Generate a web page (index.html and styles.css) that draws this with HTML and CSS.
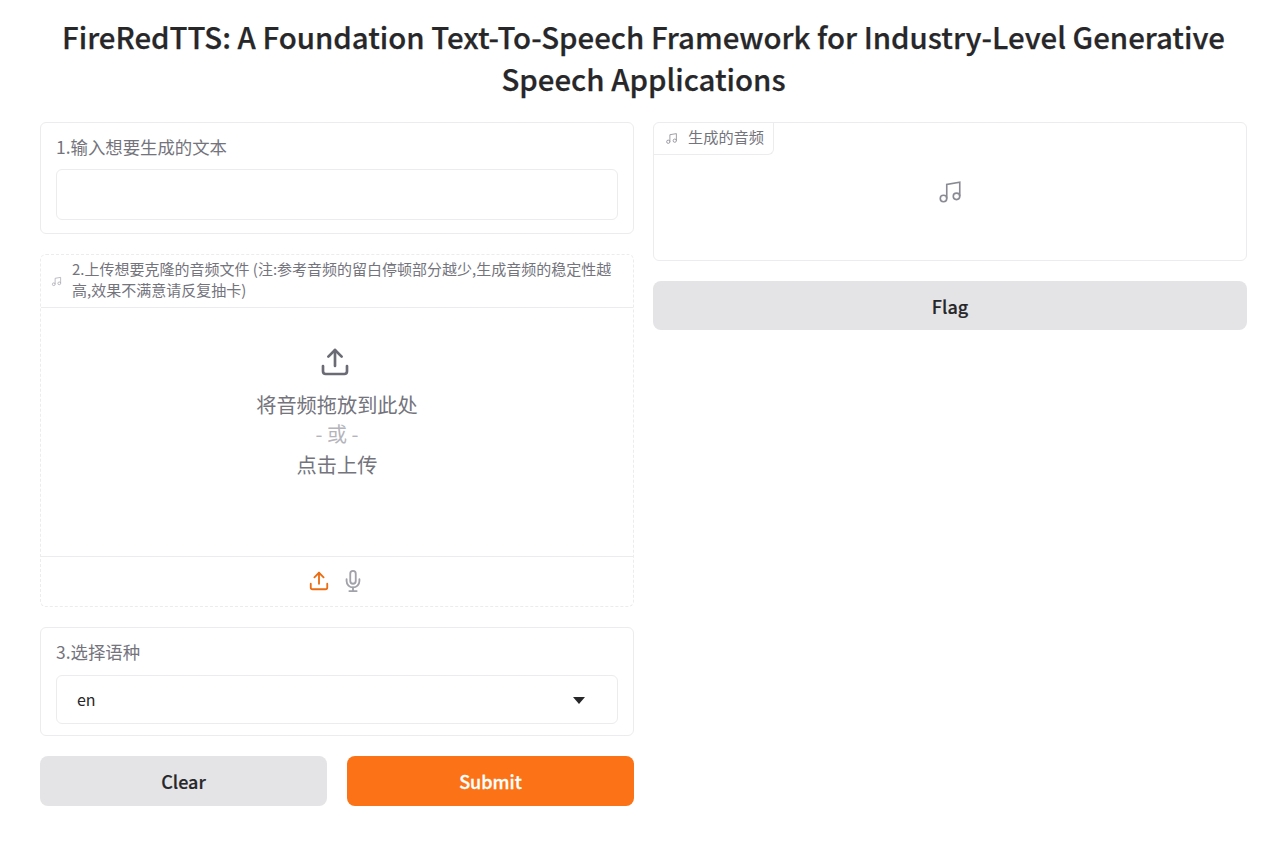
FILE: index.html
```html
<!DOCTYPE html>
<html lang="zh">
<head>
<meta charset="utf-8">
<title>FireRedTTS</title>
<link rel="stylesheet" href="styles.css">
</head>
<body>
<main class="app">
  <h1 class="title">FireRedTTS: A Foundation Text-To-Speech Framework for Industry-Level Generative Speech Applications</h1>
  <div class="columns">
    <section class="col">
      <div class="block text-block">
        <label class="label">1.输入想要生成的文本</label>
        <div class="input"></div>
      </div>
      <div class="block audio-block">
        <div class="audio-head">
          <svg class="note-small" viewBox="0 0 24 24" fill="none" stroke="currentColor" stroke-width="1.5"><path d="M9 18V5l12-2v13"/><circle cx="6" cy="18" r="3"/><circle cx="18" cy="16" r="3"/></svg>
          <span class="audio-title">2.上传想要克隆的音频文件 (注:参考音频的留白停顿部分越少,生成音频的稳定性越高,效果不满意请反复抽卡)</span>
        </div>
        <div class="drop">
          <svg class="upload" viewBox="0 0 24 24" fill="none" stroke="currentColor" stroke-width="2" stroke-linecap="round" stroke-linejoin="round"><path d="M21 15v4a2 2 0 0 1-2 2H5a2 2 0 0 1-2-2v-4"/><polyline points="17 8 12 3 7 8"/><line x1="12" y1="3" x2="12" y2="15"/></svg>
          <div class="drop-text">将音频拖放到此处</div>
          <div class="drop-or">- 或 -</div>
          <div class="drop-text">点击上传</div>
        </div>
        <div class="sources">
          <svg class="src src-on" viewBox="0 0 24 24" fill="none" stroke="currentColor" stroke-width="2" stroke-linecap="round" stroke-linejoin="round"><path d="M21 15v4a2 2 0 0 1-2 2H5a2 2 0 0 1-2-2v-4"/><polyline points="17 8 12 3 7 8"/><line x1="12" y1="3" x2="12" y2="15"/></svg>
          <svg class="src src-off" viewBox="0 0 24 24" fill="none" stroke="currentColor" stroke-width="2" stroke-linecap="round" stroke-linejoin="round"><path d="M12 1a3 3 0 0 0-3 3v8a3 3 0 0 0 6 0V4a3 3 0 0 0-3-3z"/><path d="M19 10v2a7 7 0 0 1-14 0v-2"/><line x1="12" y1="19" x2="12" y2="23"/><line x1="8" y1="23" x2="16" y2="23"/></svg>
        </div>
      </div>
      <div class="block select-block">
        <label class="label">3.选择语种</label>
        <div class="select">
          <span class="select-value">en</span>
          <svg class="caret" viewBox="0 0 12 7"><path d="M0 0h12L6 7z"/></svg>
        </div>
      </div>
      <div class="buttons">
        <button class="btn btn-grey">Clear</button>
        <button class="btn btn-primary">Submit</button>
      </div>
    </section>
    <section class="col">
      <div class="block output-block">
        <div class="tag">
          <svg class="note-tag" viewBox="0 0 24 24" fill="none" stroke="currentColor" stroke-width="1.5"><path d="M9 18V5l12-2v13"/><circle cx="6" cy="18" r="3"/><circle cx="18" cy="16" r="3"/></svg>
          <span>生成的音频</span>
        </div>
        <div class="output-empty">
          <svg class="note-big" viewBox="0 0 24 24" fill="none" stroke="currentColor" stroke-width="1.5"><path d="M9 18V5l12-2v13"/><circle cx="6" cy="18" r="3"/><circle cx="18" cy="16" r="3"/></svg>
        </div>
      </div>
      <button class="btn btn-grey btn-flag">Flag</button>
    </section>
  </div>
</main>
</body>
</html>
```
FILE: styles.css
```css
* { box-sizing: border-box; }
html, body { margin: 0; padding: 0; background: #fff; }
body {
  font-family: "Noto Sans CJK SC", "Noto Sans", sans-serif;
  color: #27272a;
}
.app { width: 1280px; height: 866px; padding: 15px 33px 0 40px; }
.title {
  margin: 0 0 23px;
  font-size: 29.4px;
  line-height: 42px;
  font-weight: 500;
  -webkit-text-stroke: 0.25px #27272a;
  text-align: center;
  color: #27272a;
}
.columns { display: flex; gap: 19px; align-items: flex-start; }
.col { width: 594px; display: flex; flex-direction: column; gap: 20px; }
.block { border: 1px solid #ececee; border-radius: 6px; background: #fff; }
.text-block { height: 112px; padding: 11px 15px; }
.label { display: block; font-size: 17.4px; line-height: 26px; color: #74747d; }
.input {
  margin-top: 9px;
  height: 51px;
  border: 1px solid #ececee;
  border-radius: 6px;
}
.audio-block { height: 353px; border-style: dashed; display: flex; flex-direction: column; }
.audio-head {
  height: 53px;
  display: flex;
  align-items: center;
  gap: 10px;
  padding: 0 20px 0 10px;
  font-size: 15px;
  line-height: 21px;
  color: #74747d;
  border-bottom: 1px solid #ececee;
}
.audio-title { margin-top: -5px; }
.note-small { width: 11px; height: 11px; color: #a1a1aa; flex: none; margin-top: 1px; }
.drop {
  height: 249px;
  display: flex;
  flex-direction: column;
  align-items: center;
  padding-top: 38px;
  border-bottom: 1px solid #ececee;
}
.upload { width: 32px; height: 32px; color: #6b6b75; margin: 0 4px 12px 0; }
.drop-text { font-size: 20.2px; line-height: 30px; color: #74747d; }
.drop-or { font-size: 20px; line-height: 30px; color: #b4b4bb; margin-top: -1px; margin-bottom: 1px; }
.sources { flex: 1; display: flex; justify-content: center; align-items: center; gap: 12px; padding: 0 2px 1px 0; }
.src { width: 22px; height: 22px; }
.src-on { color: #ea6d14; }
.src-off { color: #a1a1aa; }
.select-block { height: 109px; padding: 11px 15px; }
.select {
  margin-top: 10px;
  height: 49px;
  border: 1px solid #ececee;
  border-radius: 6px;
  padding: 0 32px 0 20px;
  display: flex;
  align-items: center;
  justify-content: space-between;
  font-size: 16px;
  color: #27272a;
}
.select-value { margin-top: -1px; }
.caret { width: 12px; height: 7px; fill: #27272a; margin-top: 1px; }
.buttons { display: flex; gap: 20px; }
.buttons .btn { flex: 1; }
.btn {
  height: 50px;
  border: 0;
  border-radius: 8px;
  font-family: inherit;
  font-size: 18px;
  font-weight: 500;
  padding: 0;
}
.btn-flag { height: 49px; }
.btn-grey { background: #e4e4e7; color: #27272a; -webkit-text-stroke: 0.2px #27272a; }
.btn-primary { background: #fb7316; color: #fff; -webkit-text-stroke: 0.3px #fff; }
.output-block { height: 139px; position: relative; }
.tag {
  position: absolute;
  top: 0;
  left: 0;
  height: 32px;
  padding: 0 9px 5px 11px;
  display: flex;
  align-items: center;
  gap: 10px;
  font-size: 15.2px;
  color: #74747d;
  border-right: 1px solid #ececee;
  border-bottom: 1px solid #ececee;
  border-radius: 0 0 6px 0;
}
.note-tag { width: 13px; height: 13px; color: #8a8a94; margin-top: 5px; }
.output-empty { height: 100%; padding-top: 56px; text-align: center; }
.note-big { width: 26px; height: 26px; color: #8a8a94; }
```
